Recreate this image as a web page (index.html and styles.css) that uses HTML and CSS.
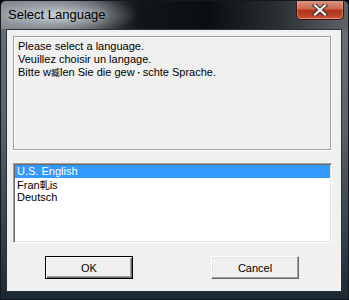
FILE: index.html
```html
<!DOCTYPE html>
<html>
<head>
<meta charset="utf-8">
<link rel="stylesheet" href="styles.css">
</head>
<body>
<div class="window">
  <div class="titlebar">
    <span class="title">Select Language</span>
    <button class="close" aria-label="Close">
      <svg width="16" height="12" viewBox="0 0 16 12">
        <path d="M3 1.5 L13 10.5 M13 1.5 L3 10.5" stroke="#3a2a28" stroke-width="4.2" stroke-linecap="square" fill="none"/>
        <path d="M3 1.5 L13 10.5 M13 1.5 L3 10.5" stroke="#ffffff" stroke-width="2.2" stroke-linecap="square" fill="none"/>
      </svg>
    </button>
  </div>
  <div class="client">
    <div class="group">
      <p>Please select a language.</p>
      <p>Veuillez choisir un langage.</p>
      <p>Bitte w<span class="mj tight">臧</span>len Sie die gew<span class="dot">・</span>schte Sprache.</p>
    </div>
    <ul class="list">
      <li class="sel">U.S. English</li>
      <li>Fran<span class="mj">軋</span>is</li>
      <li>Deutsch</li>
    </ul>
    <div class="buttons">
      <button class="btn default">OK</button>
      <button class="btn">Cancel</button>
    </div>
  </div>
</div>
</body>
</html>
```
FILE: styles.css
```css
* { box-sizing: border-box; }
html, body { margin: 0; padding: 0; }
body {
  width: 349px;
  height: 300px;
  overflow: hidden;
  background: #000;
  font-family: "Liberation Sans", "Noto Sans CJK JP", sans-serif;
}
.window {
  width: 349px;
  height: 300px;
  border: 1px solid #15191d;
  border-radius: 6px 6px 0 0;
  background: linear-gradient(to bottom, #6a7177 0%, #5c636a 40%, #2e3a45 85%, #1c2832 100%);
  display: flex;
  flex-direction: column;
  overflow: hidden;
}
.titlebar {
  height: 28px;
  flex: none;
  display: flex;
  justify-content: space-between;
  align-items: flex-start;
  padding: 0 4px 0 7px;
  background:
    radial-gradient(ellipse 80px 22px at 56px 14px, rgba(200,208,214,0.95), rgba(200,208,214,0) 100%),
    linear-gradient(to right, #7b8288 0%, #4a5056 25%, #121519 40%, #0b0e11 60%, #2a2f34 80%, #5d6469 100%);
}
.title {
  font-size: 13px;
  line-height: 28px;
  color: #000;
  text-shadow: 0 0 6px rgba(255,255,255,0.6);
}
.close {
  width: 48px;
  height: 20px;
  margin-top: -1px;
  padding: 0;
  border: 1px solid #3b1710;
  border-top: none;
  border-radius: 0 0 5px 5px;
  background: linear-gradient(to bottom, #dc9a88 0%, #cc6a52 45%, #b3341a 55%, #bf4428 85%, #d2684c 100%);
  box-shadow: inset 0 0 0 1px rgba(255,210,200,0.35);
  display: flex;
  align-items: center;
  justify-content: center;
}
.client {
  flex: 1;
  margin: 0 6px 7px 5px;
  border: 1px solid #2a333c;
  background: #f0f0f0;
  padding: 6px 0 0 6px;
  display: flex;
  flex-direction: column;
}
.group {
  width: 318px;
  height: 114px;
  flex: none;
  border: 1px solid #a0a0a0;
  box-shadow: inset 1px 1px 0 #fff, 1px 1px 0 #fff;
  padding: 3px 4px;
}
.group p {
  margin: 0;
  font-size: 11px;
  line-height: 13px;
  color: #000;
  white-space: nowrap;
}
.mj {
  font-family: "Noto Sans CJK JP", sans-serif;
  font-size: 10px;
}
.mj.tight {
  font-size: 9px;
}
.dot {
  font-family: "Noto Sans CJK JP", sans-serif;
  font-size: 8px;
}
.list {
  list-style: none;
  margin: 13px 0 0;
  padding: 1px;
  width: 319px;
  height: 80px;
  flex: none;
  background: #fff;
  border: 1px solid;
  border-color: #a0a0a0 #fff #fff #a0a0a0;
  box-shadow: inset 1px 1px 0 #696969, inset -1px -1px 0 #e3e3e3;
}
.list li {
  height: 13px;
  font-size: 11px;
  line-height: 13px;
  padding-left: 2px;
  color: #000;
  white-space: nowrap;
}
.list li.sel {
  background: #3399ff;
  color: #fff;
}
.buttons {
  display: flex;
  gap: 78px;
  margin-top: 13px;
  padding-left: 32px;
}
.btn {
  width: 88px;
  height: 23px;
  padding: 0;
  font-family: "Liberation Sans", sans-serif;
  font-size: 11px;
  color: #000;
  background: #f0f0f0;
  border: 1px solid;
  border-color: #fff #696969 #696969 #fff;
  box-shadow: inset -1px -1px 0 #a0a0a0, inset 1px 1px 0 #e3e3e3;
}
.btn.default {
  border: 1px solid #000;
  box-shadow: inset 1px 1px 0 #fff, inset -1px -1px 0 #696969, inset -2px -2px 0 #a0a0a0;
}
```
